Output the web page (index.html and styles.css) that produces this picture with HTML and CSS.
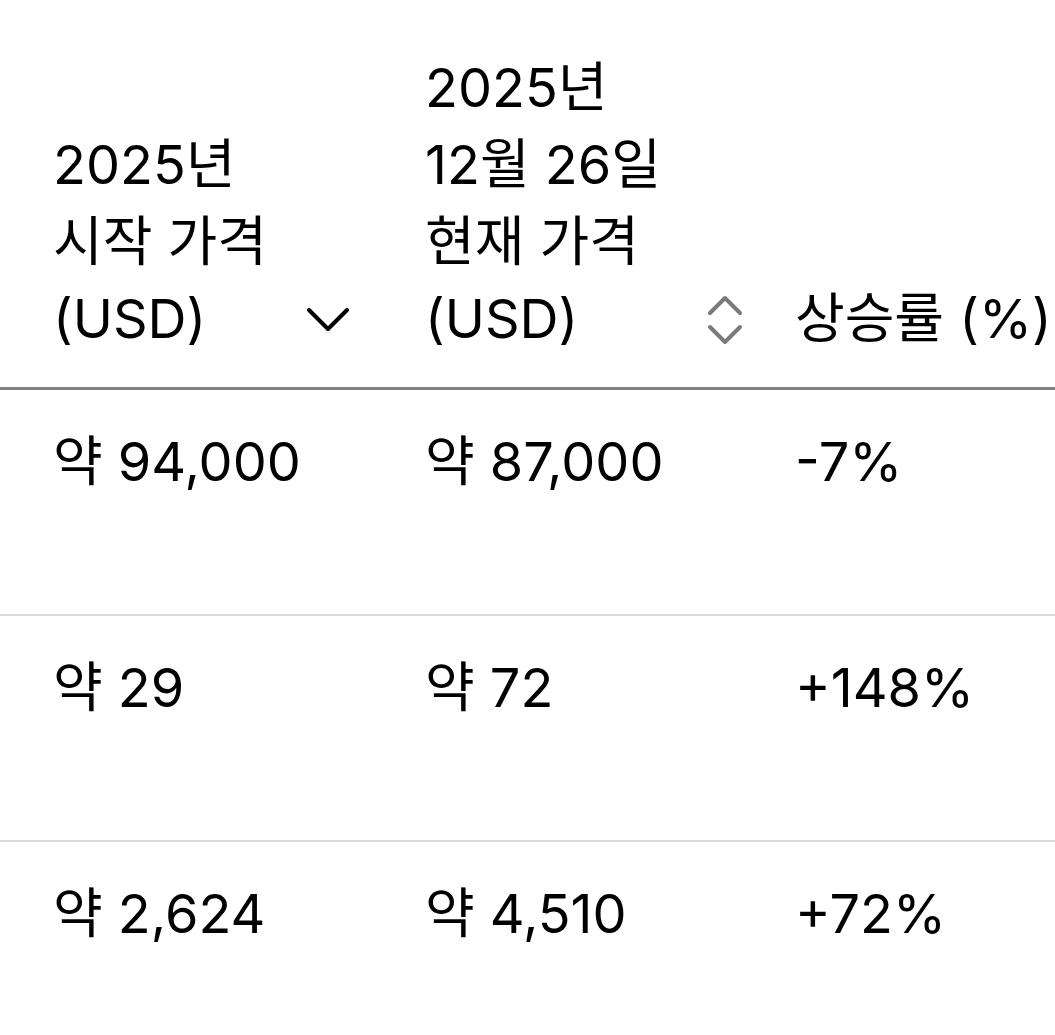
FILE: index.html
```html
<!DOCTYPE html>
<html lang="ko">
<head>
<meta charset="utf-8">
<link rel="stylesheet" href="styles.css">
</head>
<body>
<div class="wrap">
  <div class="table">
    <div class="row head">
      <div class="cell">
        <div class="htext">2025년<br>시작 가격<br>(USD)</div>
        <svg class="icon chev" width="46" height="28" viewBox="0 0 46 28"><path d="M4 4 L23 23 L42 4" fill="none" stroke="#000" stroke-width="4" stroke-linecap="round" stroke-linejoin="round"/></svg>
      </div>
      <div class="cell">
        <div class="htext">2025년<br>12월 26일<br>현재 가격<br>(USD)</div>
        <svg class="icon sort" width="36" height="50" viewBox="0 0 36 50"><path d="M3 18 L18 3 L33 18 M3 32 L18 47 L33 32" fill="none" stroke="#7a7a7a" stroke-width="4" stroke-linecap="round" stroke-linejoin="round"/></svg>
      </div>
      <div class="cell">
        <div class="htext">상승률 (%)</div>
      </div>
    </div>
    <div class="row body">
      <div class="cell">약 94,000</div>
      <div class="cell">약 87,000</div>
      <div class="cell">-7%</div>
    </div>
    <div class="row body">
      <div class="cell">약 29</div>
      <div class="cell">약 72</div>
      <div class="cell">+148%</div>
    </div>
    <div class="row body">
      <div class="cell">약 2,624</div>
      <div class="cell">약 4,510</div>
      <div class="cell">+72%</div>
    </div>
  </div>
</div>
</body>
</html>
```
FILE: styles.css
```css
html, body {
  margin: 0;
  padding: 0;
  background: #fff;
}
body {
  font-family: Inter, "Noto Sans CJK KR", sans-serif;
  color: #000;
  font-size: 54px;
  overflow: hidden;
}
.wrap {
  width: 1055px;
  height: 1035px;
  overflow: hidden;
}
.table {
  width: 1200px;
}
.row {
  display: grid;
  grid-template-columns: 372px 370px 458px;
}
.head {
  height: 390px;
  border-bottom: 3px solid #808080;
  box-sizing: border-box;
  align-items: end;
}
.head .cell {
  display: flex;
  align-items: flex-end;
  gap: 44px;
  padding: 0 0 30px 53px;
}
.htext {
  line-height: 77px;
  white-space: nowrap;
}
.icon {
  flex: none;
}
.chev {
  margin-left: -6px;
  margin-bottom: 23px;
}
.sort {
  margin-left: 2px;
  margin-bottom: 12px;
}
.body {
  height: 226px;
  border-bottom: 2px solid #d9d9d9;
  box-sizing: border-box;
}
.body .cell {
  padding: 42px 0 0 53px;
  line-height: 60px;
  white-space: nowrap;
}
```
